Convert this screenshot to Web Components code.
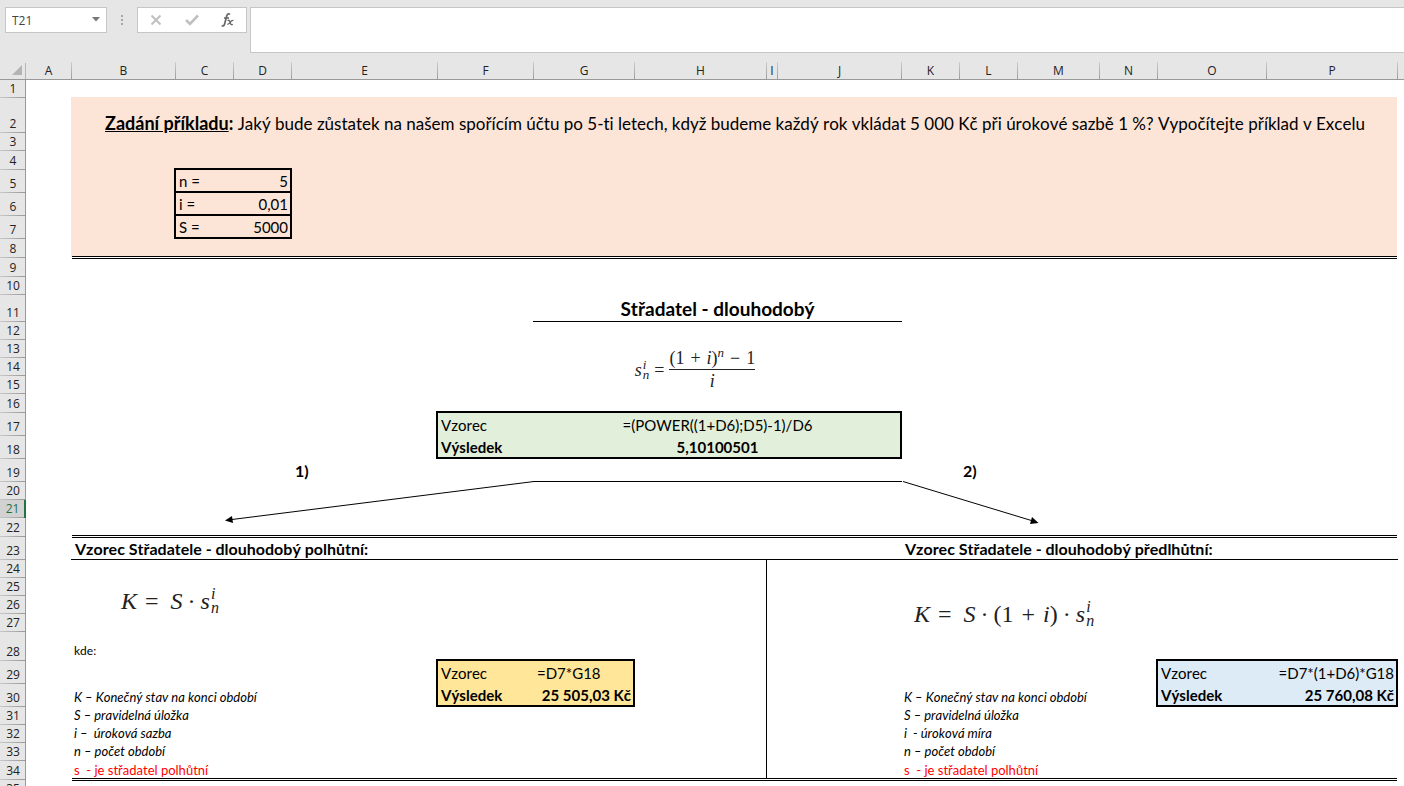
<!DOCTYPE html>
<html lang="cs">
<head>
<meta charset="utf-8">
<title>Střadatel - dlouhodobý</title>
<style>
    html, body {
        height: 100%;
        margin: 0;
    }

    body {
        display: flex;
        flex-direction: column;
        overflow: hidden;
        background: #ffffff;
        color: #000000;
        font-family: Lato, "Liberation Sans", sans-serif;
        font-size: 15px;
        line-height: 20px;
        font-kerning: none;
        font-variant-ligatures: none;
    }

    work-sheet {
        flex: 1;
    }

    .task {
        font-size: 17px;
        line-height: 16px;
    }

    .task b {
        font-size: 18px;
    }

    .title {
        font-size: 19px;
        line-height: 24px;
        font-weight: 700;
    }

    .heading, .branch {
        font-size: 16px;
        line-height: 20px;
        font-weight: 700;
    }

    .note {
        font-size: 13px;
        line-height: 18px;
        font-style: italic;
    }

    .plain {
        font-size: 12px;
        font-style: normal;
    }

    .red {
        color: #ff0000;
        font-style: normal;
    }
</style>
</head>
<body>
<formula-bar cell="T21"></formula-bar>
<work-sheet selected="21">
    <sheet-cell ref="B2:P8" fill="peach"></sheet-cell>
    <sheet-cell ref="B2:P2" align="center" class="task"><b><u>Zadání příkladu</u>:</b> Jaký bude zůstatek na našem spořícím účtu po 5-ti letech, když budeme každý rok vkládat 5 000 Kč při úrokové sazbě 1 %? Vypočítejte příklad v Excelu</sheet-cell>
    <input-table ref="C5:D7"></input-table>
    <sheet-cell ref="B9:P9" line="double"></sheet-cell>

    <sheet-cell ref="G11:J11" align="center" line="bottom" class="title">Střadatel - dlouhodobý</sheet-cell>
    <math-formula ref="G12:J16" name="annuity"></math-formula>
    <result-box ref="F17:J18" color="green" align="center" formula="=(POWER((1+D6);D5)-1)/D6" result="5,10100501"></result-box>

    <sheet-cell ref="E19" class="branch">1)</sheet-cell>
    <sheet-cell ref="L19" class="branch">2)</sheet-cell>
    <sheet-cell ref="G19:J19" line="bottom"></sheet-cell>
    <branch-arrow ref="C20:F22" side="left"></branch-arrow>
    <branch-arrow ref="K20:M22" side="right"></branch-arrow>

    <sheet-cell ref="B23:P23" line="double"></sheet-cell>
    <sheet-cell ref="B23:P23" line="bottom"></sheet-cell>
    <sheet-cell ref="B23:H23" class="heading">Vzorec Střadatele - dlouhodobý polhůtní:</sheet-cell>
    <sheet-cell ref="K23:P23" class="heading">Vzorec Střadatele - dlouhodobý předlhůtní:</sheet-cell>
    <sheet-cell ref="H24:H34" line="right"></sheet-cell>

    <math-formula ref="B25:D27" name="later"></math-formula>
    <sheet-cell ref="B28" class="note plain">kde:</sheet-cell>
    <sheet-cell ref="B30:E30" class="note">K – Konečný stav na konci období</sheet-cell>
    <sheet-cell ref="B31:E31" class="note">S – pravidelná úložka</sheet-cell>
    <sheet-cell ref="B32:E32" class="note">i –&nbsp; úroková sazba</sheet-cell>
    <sheet-cell ref="B33:E33" class="note">n – počet období</sheet-cell>
    <sheet-cell ref="B34:E34" class="note red">s&nbsp; - je střadatel polhůtní</sheet-cell>
    <result-box ref="F29:G30" color="yellow" align="left" formula="=D7*G18" result="25 505,03 Kč"></result-box>

    <math-formula ref="K25:N28" name="sooner"></math-formula>
    <sheet-cell ref="K30:N30" class="note">K – Konečný stav na konci období</sheet-cell>
    <sheet-cell ref="K31:N31" class="note">S – pravidelná úložka</sheet-cell>
    <sheet-cell ref="K32:N32" class="note">i&nbsp; - úroková míra</sheet-cell>
    <sheet-cell ref="K33:N33" class="note">n – počet období</sheet-cell>
    <sheet-cell ref="K34:N34" class="note red">s&nbsp; - je střadatel polhůtní</sheet-cell>
    <result-box ref="O29:P30" color="blue" align="right" formula="=D7*(1+D6)*G18" result="25 760,08 Kč"></result-box>
    <sheet-cell ref="B35:P35" line="double"></sheet-cell>
</work-sheet>

<script>
const COLUMNS = {
    A: 46, B: 104, C: 58, D: 58, E: 146, F: 96, G: 101, H: 132, I: 11,
    J: 124, K: 58, L: 58, M: 82, N: 58, O: 109, P: 131
};
const ROWS = [
    18, 35, 18, 19, 23, 23, 23, 19, 19, 18, 27, 18, 18, 18, 18, 19, 23, 23,
    23, 18, 18, 19, 23, 18, 18, 18, 18, 29, 23, 23, 18, 18, 18, 19, 18
];

// "B2:P8" -> grid-area; line 1 of the grid is taken by the headers
function gridArea(ref) {
    const [from, to = from] = ref.split(':');
    const column = (cell) => cell.charCodeAt(0) - 63;
    const row = (cell) => Number(cell.slice(1)) + 1;
    return `${row(from)} / ${column(from)} / ${row(to) + 1} / ${column(to) + 1}`;
}

class GridItem extends HTMLElement {
    render(html) {
        this.attachShadow({ mode: 'open' });
        this.shadowRoot.innerHTML = html;
        this.style.gridArea = gridArea(this.getAttribute('ref'));
    }
}

class FormulaBar extends HTMLElement {
    constructor() {
        super();
        this.attachShadow({ mode: 'open' });
        this.shadowRoot.innerHTML = `
            <style>
                :host {
                    display: flex;
                    align-items: flex-start;
                    background: #e6e6e6;
                }

                .box {
                    display: flex;
                    box-sizing: border-box;
                    height: 26px;
                    margin-top: 7px;
                    border: 1px solid #c6c6c6;
                    background: #ffffff;
                }

                .name {
                    width: 102px;
                    margin-left: 5px;
                }

                input {
                    flex: 1;
                    min-width: 0;
                    border: none;
                    outline: none;
                    padding: 0 6px;
                    background: none;
                    color: #444444;
                    font: 12px "Open Sans", sans-serif;
                }

                button {
                    display: grid;
                    place-items: center;
                    flex: 1;
                    border: none;
                    padding: 0;
                    background: none;
                }

                .name button {
                    flex: 0 0 20px;
                }

                .dots {
                    width: 30px;
                    height: 26px;
                    margin-top: 7px;
                }

                .actions {
                    width: 110px;
                }

                textarea {
                    flex: 1;
                    box-sizing: border-box;
                    height: 46px;
                    margin: 7px 0 0 3px;
                    border: 1px solid #c6c6c6;
                    border-right: none;
                    background: #ffffff;
                    outline: none;
                    resize: none;
                }
            </style>
            <div class="box name">
                <input aria-label="Pole názvů">
                <button aria-label="Rozbalit"><svg width="8" height="7"><path d="M0 0h8L4 4.500z" fill="#777"/></svg></button>
            </div>
            <svg class="dots" viewBox="0 0 30 26" fill="#a6a6a6"><path d="M14 8h2v2h-2zM14 12h2v2h-2zM14 16h2v2h-2z"/></svg>
            <div class="box actions">
                <button aria-label="Storno"><svg width="12" height="12"><path d="M1.500 1.500l9 9M10.500 1.500l-9 9" stroke="#c0c0c0" stroke-width="2"/></svg></button>
                <button aria-label="Zadat"><svg width="14" height="12"><path d="M1 6l4 4 8-8.500" fill="none" stroke="#c0c0c0" stroke-width="2.600"/></svg></button>
                <button aria-label="Vložit funkci"><svg width="14" height="16" fill="none" stroke="#666"><path d="M9 2.500C7.500 1 6.200 2 5.700 4L3.600 12c-.5 1.800-1.600 2.400-2.800 1.500M3 6h5" stroke-width="1.700"/><path d="M6.500 8.500c1.500-.8 2 .3 2.500 2s1.200 2.700 2.800 1.700M12.500 8.500c-1.500-.5-2.500.7-3.500 2s-1.500 2-2.700 1.500" stroke-width="1.300"/></svg></button>
            </div>
            <textarea aria-label="Řádek vzorců"></textarea>
        `;
        this.shadowRoot.querySelector('input').value = this.getAttribute('cell');
    }
}

class WorkSheet extends HTMLElement {
    constructor() {
        super();
        const selected = Number(this.getAttribute('selected'));
        const columns = Object.keys(COLUMNS).map((name, i) =>
            `<div class="column" style="grid-area: 1 / ${i + 2}">${name}</div>`).join('');
        const rows = ROWS.map((height, i) =>
            `<div class="row${i + 1 === selected ? ' selected' : ''}" style="grid-area: ${i + 2} / 1">${i + 1}</div>`).join('');
        this.attachShadow({ mode: 'open' });
        this.shadowRoot.innerHTML = `
            <style>
                :host {
                    display: grid;
                    grid-template-columns: 26px ${Object.values(COLUMNS).map((w) => w + 'px').join(' ')} 1fr;
                    grid-template-rows: 27px ${ROWS.map((h) => h + 'px').join(' ')};
                    min-height: 0;
                    overflow: hidden;
                }

                .bar {
                    grid-area: 1 / 1 / 2 / -1;
                    background: #e6e6e6;
                    border-bottom: 1px solid #999999;
                }

                .column, .row, .corner {
                    font: 12px/18px "Open Sans", sans-serif;
                    text-align: center;
                    color: #222222;
                }

                .column {
                    align-self: end;
                    height: 17px;
                    line-height: 17px;
                    margin-bottom: 1px;
                    border-right: 1px solid;
                    border-image: linear-gradient(#d0d0d0, #999999) 1;
                }

                .corner {
                    grid-area: 1 / 1;
                    display: flex;
                    align-items: flex-end;
                    justify-content: flex-end;
                    padding: 0 3px 4px 0;
                    border-right: 1px solid #b5b5b5;
                    margin: 10px 0 1px;
                }

                .row {
                    display: flex;
                    align-items: flex-end;
                    justify-content: center;
                    padding-left: 1px;
                    background: linear-gradient(90deg, #c8c8c8, #999999) bottom / 100% 1px no-repeat #e6e6e6;
                    border-right: 1px solid #999999;
                }

                .selected {
                    background-color: #d2d2d2;
                    border-right: 2px solid #217346;
                    color: #217346;
                }
            </style>
            <div class="bar"></div>
            <div class="corner"><svg width="10" height="10"><path d="M10 0v10H0z" fill="#b4b4b4"/></svg></div>
            ${columns}
            ${rows}
            <slot></slot>
        `;
    }
}

class SheetCell extends GridItem {
    connectedCallback() {
        this.render(`
            <style>
                :host {
                    display: flex;
                    flex-direction: column;
                    justify-content: flex-end;
                    box-sizing: border-box;
                    padding: 0 3px 1px;
                    white-space: nowrap;
                }

                :host([align="center"]) {
                    text-align: center;
                }

                :host([fill="peach"]) {
                    margin: -1px 1px 1px -1px;
                    background: #fce4d6;
                }

                :host([line="double"]) {
                    margin: -2px 1px 0 0;
                    border-top: 3px double #000000;
                }

                :host([line="bottom"]) {
                    margin-left: -1px;
                    padding-bottom: 0;
                    border-bottom: 1px solid #000000;
                }

                :host([line="right"]) {
                    margin-bottom: 2px;
                    border-right: 1px solid #000000;
                }

                :host(.note) {
                    padding-left: 2px;
                }
            </style>
            <div><slot></slot></div>
        `);
    }
}

class InputTable extends GridItem {
    connectedCallback() {
        const values = [['n =', '5'], ['i =', '0,01'], ['S =', '5000']];
        this.render(`
            <style>
                :host {
                    display: grid;
                    margin: -2px 0 0 -2px;
                }

                table {
                    border-collapse: collapse;
                }

                tr {
                    border: 2px solid #000000;
                }

                th, td {
                    padding: 1px 2px 0 3px;
                    font-weight: 400;
                    text-align: left;
                }

                td {
                    text-align: right;
                }
            </style>
            <table>
                ${values.map(([name, value]) => `<tr><th scope="row">${name}</th><td>${value}</td></tr>`).join('')}
            </table>
        `);
    }
}

class ResultBox extends GridItem {
    connectedCallback() {
        const first = this.getAttribute('ref')[0];
        this.render(`
            <style>
                :host {
                    display: grid;
                    margin: -2px 0 0 -2px;
                    border: 2px solid #000000;
                }

                :host([color="green"]) { background: #e2efda; }
                :host([color="yellow"]) { background: #ffe699; }
                :host([color="blue"]) { background: #ddebf7; }

                table {
                    width: 100%;
                    table-layout: fixed;
                    border-collapse: collapse;
                    white-space: nowrap;
                }

                th, td {
                    height: 20px;
                    padding: 2px 2px 0 3px;
                    font-weight: inherit;
                    text-align: left;
                }

                th {
                    width: ${COLUMNS[first] - 5}px;
                }

                .result {
                    font-weight: 700;
                }

                td, .result td {
                    text-align: right;
                }

                :host([align="center"]) td {
                    text-align: center;
                }

                :host([align="left"]) tr:first-child td {
                    text-align: left;
                }
            </style>
            <table>
                <tr><th scope="row">Vzorec</th><td>${this.getAttribute('formula')}</td></tr>
                <tr class="result"><th scope="row">Výsledek</th><td>${this.getAttribute('result')}</td></tr>
            </table>
        `);
    }
}

const S_N_I = '<i>s</i><span class="scripts"><i>i</i><i>n</i></span>';
const ONE_PLUS_I = '<span>(1<span class="sign">+</span><i>i</i>)</span>';
const FORMULAS = {
    annuity: `${S_N_I}<span class="op">=</span><span class="fraction"><span>${ONE_PLUS_I}<sup><i>n</i></sup><span class="sign">−</span>1</span><span class="under"><i>i</i></span></span>`,
    later: `<i>K</i><span class="op wide">=</span><i>S</i><span class="op">·</span>${S_N_I}`,
    sooner: `<i>K</i><span class="op wide">=</span><i>S</i><span class="op">·</span>${ONE_PLUS_I}<span class="op">·</span>${S_N_I}`
};

class MathFormula extends GridItem {
    connectedCallback() {
        this.render(`
            <style>
                :host {
                    display: flex;
                    align-items: center;
                    color: #222222;
                    font-family: "Liberation Serif", serif;
                    font-size: 24px;
                    line-height: 28px;
                    white-space: nowrap;
                }

                :host([name="annuity"]) {
                    justify-content: center;
                    padding: 4px 46px 0 0;
                    font-size: 18px;
                    line-height: 22px;
                }

                :host([name="later"]) {
                    padding: 0 0 8px 49px;
                }

                :host([name="sooner"]) {
                    padding: 0 0 12px 12px;
                }

                .op {
                    margin: 0 5px;
                }

                .wide {
                    margin: 0 12px 0 8px;
                }

                .sign {
                    margin: 0 8px;
                }

                :host([name="annuity"]) .sign {
                    margin: 0 6px;
                }

                .scripts {
                    display: inline-flex;
                    flex-direction: column;
                    margin-left: 1px;
                    font-size: 16px;
                    line-height: 14px;
                }

                :host([name="annuity"]) .scripts {
                    font-size: 13px;
                    line-height: 10px;
                }

                .fraction {
                    display: flex;
                    flex-direction: column;
                    text-align: center;
                }

                .under {
                    border-top: 1px solid #222222;
                }

                sup {
                    font-size: 13px;
                    line-height: 0;
                }
            </style>
            ${FORMULAS[this.getAttribute('name')]}
        `);
    }
}

class BranchArrow extends GridItem {
    connectedCallback() {
        const left = this.getAttribute('side') === 'left';
        this.render(`
            <style>
                :host {
                    display: block;
                }

                svg {
                    display: block;
                    overflow: visible;
                }
            </style>
            ${left
                ? '<svg width="358" height="55"><path d="M358-.5L56 37.500" stroke="#000"/><path d="M49 38.500l7-4.500 1 7z"/></svg>'
                : '<svg width="198" height="55"><path d="M1-.5l130 39.500" stroke="#000"/><path d="M136.500 41l-8.500 1 2-7z"/></svg>'}
        `);
    }
}

window.customElements.define('formula-bar', FormulaBar);
window.customElements.define('work-sheet', WorkSheet);
window.customElements.define('sheet-cell', SheetCell);
window.customElements.define('input-table', InputTable);
window.customElements.define('result-box', ResultBox);
window.customElements.define('math-formula', MathFormula);
window.customElements.define('branch-arrow', BranchArrow);
</script>
</body>
</html>
